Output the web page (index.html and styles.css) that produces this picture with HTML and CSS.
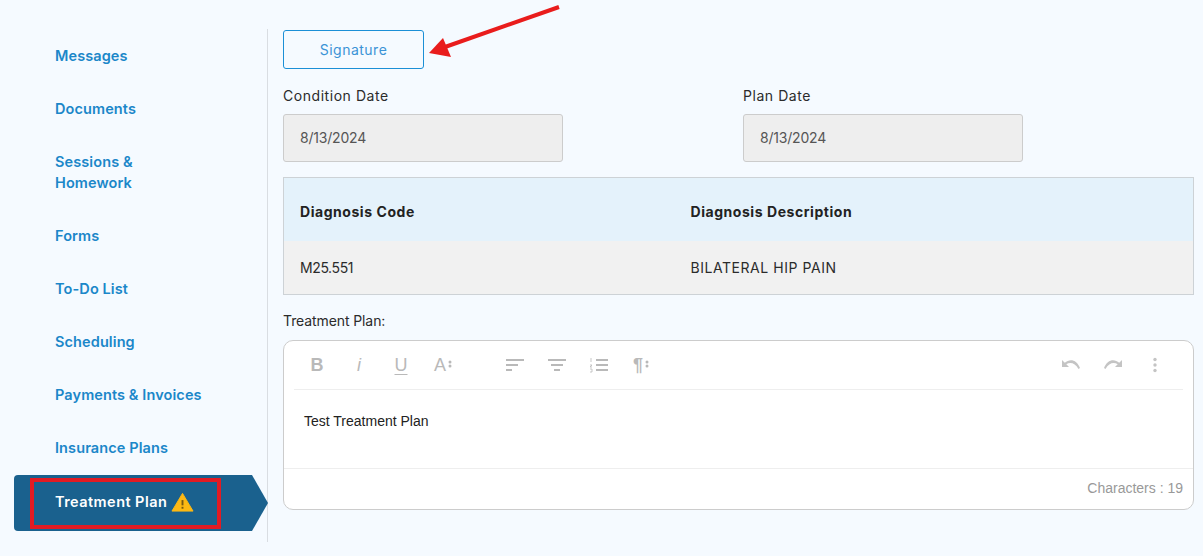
FILE: index.html
```html
<!DOCTYPE html>
<html lang="en">

<head>
    <meta charset="UTF-8">
    <meta name="viewport" content="width=device-width, initial-scale=1.0">
    <title>Treatment Plan</title>
    <link rel="stylesheet" href="styles.css">
</head>

<body>
    <div class="page">
        <nav class="sidenav">
            <a class="navlink">Messages</a>
            <a class="navlink">Documents</a>
            <a class="navlink navlink-two">Sessions &amp;<br>Homework</a>
            <a class="navlink">Forms</a>
            <a class="navlink">To-Do List</a>
            <a class="navlink">Scheduling</a>
            <a class="navlink">Payments &amp; Invoices</a>
            <a class="navlink">Insurance Plans</a>
            <a class="navlink navlink-active">
                Treatment Plan
                <svg class="warn" width="23" height="20" viewBox="0 0 24 20">
                    <path d="M12 1 L23 19.5 H1 Z" fill="#fdb913" stroke="#fdb913" stroke-linejoin="round" />
                    <rect x="11" y="8" width="2" height="5.5" fill="#7a5a10" />
                    <rect x="11" y="15" width="2" height="2" fill="#7a5a10" />
                </svg>
                <span class="redbox"></span>
            </a>
        </nav>

        <main class="content">
            <div class="sigrow">
                <button class="sigbtn">Signature</button>
                <svg class="arrow" width="140" height="60" viewBox="0 0 140 60">
                    <path d="M138 7 L24 47" stroke="#e91c1c" stroke-width="4" fill="none" />
                    <path d="M8 53 L22 38 L30 57 Z" fill="#e91c1c" />
                </svg>
            </div>

            <div class="dates">
                <div class="field">
                    <label>Condition Date</label>
                    <div class="dateinput">8/13/2024</div>
                </div>
                <div class="field">
                    <label>Plan Date</label>
                    <div class="dateinput">8/13/2024</div>
                </div>
            </div>

            <table class="diag">
                <thead>
                    <tr>
                        <th>Diagnosis Code</th>
                        <th>Diagnosis Description</th>
                    </tr>
                </thead>
                <tbody>
                    <tr>
                        <td class="code">M25.551</td>
                        <td>BILATERAL HIP PAIN</td>
                    </tr>
                </tbody>
            </table>

            <div class="planlabel">Treatment Plan:</div>

            <div class="editor">
                <div class="toolbar">
                    <div class="toolgroup">
                        <span class="tool tool-b">B</span>
                        <span class="tool tool-i">i</span>
                        <span class="tool tool-u">U</span>
                        <span class="tool tool-a">A<svg width="4" height="12" viewBox="0 0 4 12"><circle cx="2" cy="3" r="1.5" /><circle cx="2" cy="7" r="1.5" /></svg></span>
                    </div>
                    <div class="toolgroup toolgroup-2">
                        <svg class="tool-svg" width="20" height="14" viewBox="0 0 20 14"><path d="M1 2H19M1 7H13M1 12H7" /></svg>
                        <svg class="tool-svg" width="20" height="14" viewBox="0 0 20 14"><path d="M1 2H19M4 7H16M7 12H13" /></svg>
                        <svg class="tool-svg" width="20" height="16" viewBox="0 0 20 16"><path d="M7 3H19M7 8H19M7 13H19" /><path class="thin" d="M2 1V5M1 8H3L1 10H3M1 12H3V15H1" /></svg>
                        <span class="tool tool-p">¶<svg width="4" height="12" viewBox="0 0 4 12"><circle cx="2" cy="3" r="1.5" /><circle cx="2" cy="7" r="1.5" /></svg></span>
                    </div>
                    <div class="toolgroup toolgroup-end">
                        <svg class="tool-fill" width="20" height="12" viewBox="0 0 20 12"><path d="M1 1 V8 H8 L5.3 5.3 C9 2.6 14 3.6 17.5 10 L19 9 C16 1 9 -1 3.8 3.8 Z" /></svg>
                        <svg class="tool-fill" width="20" height="12" viewBox="0 0 20 12"><path d="M19 1 V8 H12 L14.7 5.3 C11 2.6 6 3.6 2.5 10 L1 9 C4 1 11 -1 16.2 3.8 Z" /></svg>
                        <svg class="tool-fill tool-dots" width="4" height="16" viewBox="0 0 4 16"><circle cx="2" cy="2.5" r="1.7" /><circle cx="2" cy="8" r="1.7" /><circle cx="2" cy="13.5" r="1.7" /></svg>
                    </div>
                </div>
                <div class="editarea">Test Treatment Plan</div>
                <div class="editfoot">Characters : 19</div>
            </div>
        </main>
    </div>
</body>

</html>
```
FILE: styles.css
```css
body {
    margin: 0;
    height: 556px;
    overflow: hidden;
    background-color: #f5faff;
    font-family: 'Inter', 'Liberation Sans', sans-serif;
    color: #2b2b2b;
}

.page {
    display: flex;
    padding-top: 29px;
}

/* left menu */
.sidenav {
    box-sizing: border-box;
    width: 254px;
    height: 513px;
    margin-left: 14px;
    flex-shrink: 0;
    border-right: 1px solid #d9dde2;
    display: flex;
    flex-direction: column;
}

.navlink {
    display: flex;
    align-items: center;
    height: 53px;
    padding-left: 41px;
    font-size: 14.5px;
    font-weight: 600;
    letter-spacing: 0.1px;
    color: #1b87c9;
    flex-shrink: 0;
}

.navlink-two {
    display: block;
    height: 74px;
    padding-top: 16px;
    box-sizing: border-box;
    line-height: 21px;
}

.navlink-active {
    position: relative;
    height: 56px;
    width: 254px;
    box-sizing: border-box;
    margin-top: 1px;
    padding-bottom: 3px;
    color: #fff;
    letter-spacing: 0.45px;
    background-color: #1a618e;
    border-radius: 4px 0 0 4px;
    clip-path: polygon(0 0, 238px 0, 254px 28px, 238px 56px, 0 56px);
    gap: 4px;
}

.warn {
    flex-shrink: 0;
}

.redbox {
    position: absolute;
    left: 16px;
    top: 3px;
    width: 191px;
    height: 51px;
    box-sizing: border-box;
    border: 4px solid #e21b23;
}

/* right side */
.content {
    margin-left: 15px;
    width: 911px;
    flex-shrink: 0;
    font-size: 14px;
}

.sigrow {
    position: relative;
    height: 40px;
    padding-top: 1px;
}

.sigbtn {
    width: 141px;
    height: 39px;
    background: none;
    border: 1px solid #1b8fd6;
    border-radius: 3px;
    color: #3b93d6;
    font-family: inherit;
    font-size: 14px;
    letter-spacing: 0.5px;
}

.arrow {
    position: absolute;
    left: 138px;
    top: -29px;
}

.dates {
    display: flex;
    gap: 180px;
    margin-top: 16px;
}

.field {
    width: 280px;
}

.field label {
    display: block;
    height: 19px;
    line-height: 19px;
    font-size: 14px;
    letter-spacing: 0.55px;
}

.dateinput {
    box-sizing: border-box;
    height: 48px;
    margin-top: 9px;
    padding-left: 16px;
    line-height: 46px;
    background-color: #eeeeee;
    border: 1px solid #cccccc;
    border-radius: 3px;
    color: #555;
    font-size: 14px;
    letter-spacing: -0.2px;
}

.diag {
    border-collapse: collapse;
    width: 911px;
    margin-top: 15px;
    table-layout: fixed;
    border: 1px solid #cdd2d6;
}

.diag th,
.diag td {
    padding: 0 0 0 16px;
    text-align: left;
    font-size: 14px;
    letter-spacing: 0.55px;
}

.diag th {
    height: 63px;
    padding-top: 5px;
    box-sizing: border-box;
    background-color: #e4f2fb;
    font-weight: 700;
    color: #222;
}

.diag td {
    height: 54px;
    box-sizing: border-box;
    background-color: #f1f1f1;
}

.diag td.code {
    letter-spacing: -0.4px;
}

.diag th:first-child,
.diag td:first-child {
    width: 391px;
    box-sizing: border-box;
}

.planlabel {
    margin-top: 16px;
    height: 19px;
    line-height: 19px;
    letter-spacing: -0.1px;
}

/* text editor */
.editor {
    box-sizing: border-box;
    height: 170px;
    margin-top: 10px;
    background-color: #fff;
    border: 1px solid #cccccc;
    border-radius: 10px;
    display: flex;
    flex-direction: column;
}

.toolbar {
    display: flex;
    align-items: center;
    height: 48px;
    margin: 0 10px;
    padding-left: 13px;
    padding-right: 18px;
    border-bottom: 1px solid #eeeeee;
    flex-shrink: 0;
}

.toolgroup {
    display: flex;
    align-items: center;
    gap: 22px;
}

.toolgroup-2 {
    margin-left: 52px;
}

.toolgroup-end {
    margin-left: auto;
}

.tool {
    display: flex;
    align-items: center;
    gap: 2px;
    color: #b9b9b9;
    font-family: 'Liberation Sans', sans-serif;
    font-size: 18px;
    width: 20px;
    justify-content: center;
}

.tool svg {
    fill: #b9b9b9;
}

.tool-b,
.tool-p {
    font-weight: 700;
}

.tool-i {
    font-style: italic;
}

.tool-u {
    text-decoration: underline;
    text-underline-offset: 3px;
}

.tool-svg path {
    stroke: #b9b9b9;
    stroke-width: 2;
    fill: none;
}

.tool-svg path.thin {
    stroke-width: 0.8;
}

.tool-fill {
    fill: #c4c4c4;
}

.tool-dots {
    margin: 0 8px;
}

.editarea {
    flex: 1;
    padding: 23px 20px 0;
    font-family: 'Liberation Sans', sans-serif;
    font-size: 14px;
    color: #222;
}

.editfoot {
    height: 40px;
    line-height: 38px;
    padding-right: 10px;
    text-align: right;
    border-top: 1px solid #eeeeee;
    font-family: 'Liberation Sans', sans-serif;
    font-size: 14px;
    color: #999;
}
```
